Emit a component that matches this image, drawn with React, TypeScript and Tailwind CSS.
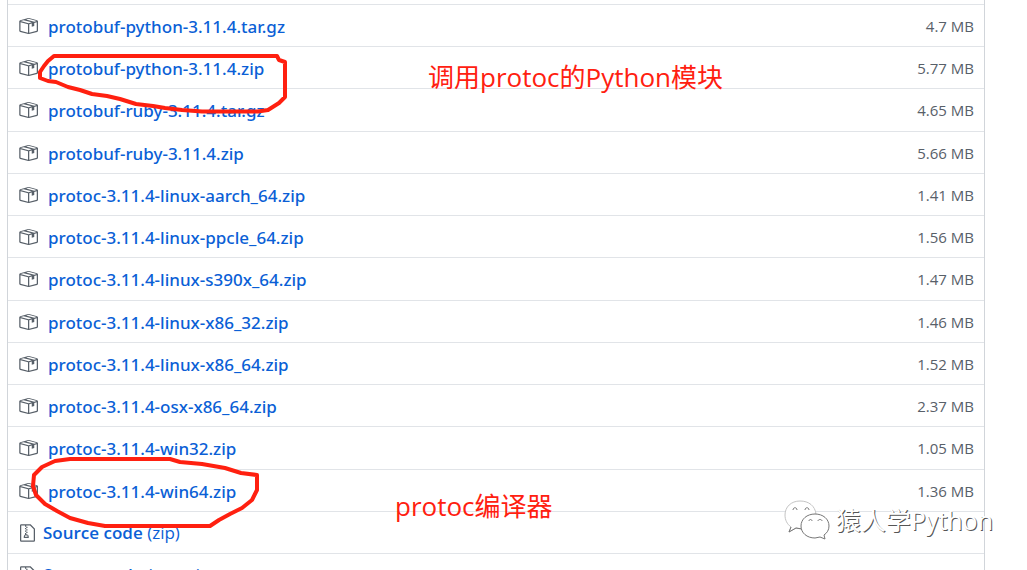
import React from "react";

type Asset = { name: string; size: string };

const assets: Asset[] = [
  { name: "protobuf-python-3.11.4.tar.gz", size: "4.7 MB" },
  { name: "protobuf-python-3.11.4.zip", size: "5.77 MB" },
  { name: "protobuf-ruby-3.11.4.tar.gz", size: "4.65 MB" },
  { name: "protobuf-ruby-3.11.4.zip", size: "5.66 MB" },
  { name: "protoc-3.11.4-linux-aarch_64.zip", size: "1.41 MB" },
  { name: "protoc-3.11.4-linux-ppcle_64.zip", size: "1.56 MB" },
  { name: "protoc-3.11.4-linux-s390x_64.zip", size: "1.47 MB" },
  { name: "protoc-3.11.4-linux-x86_32.zip", size: "1.46 MB" },
  { name: "protoc-3.11.4-linux-x86_64.zip", size: "1.52 MB" },
  { name: "protoc-3.11.4-osx-x86_64.zip", size: "2.37 MB" },
  { name: "protoc-3.11.4-win32.zip", size: "1.05 MB" },
  { name: "protoc-3.11.4-win64.zip", size: "1.36 MB" },
];

const rowClass =
  "flex h-[42px] items-center border-b border-[#e1e4e8] px-2.5 [&:nth-child(4n+3)]:h-[43px]";

function PackageIcon() {
  return (
    <svg viewBox="0 0 16 16" className="size-5 shrink-0 fill-[#586069]" aria-hidden="true">
      <path
        fillRule="evenodd"
        d="M1 4.27v7.47c0 .45.3.84.75.97l6.5 1.73c.16.05.34.05.5 0l6.5-1.73c.45-.13.75-.52.75-.97V4.27c0-.45-.3-.84-.75-.97l-6.5-1.74a1.4 1.4 0 00-.5 0L1.75 3.3c-.45.13-.75.52-.75.97zm7 9.09l-6-1.59V5l6 1.61v6.75zM2 4l2.5-.67L11 5.06l-2.5.67L2 4zm13 7.77l-6 1.59V6.61l2-.55V8.5l2-.53V5.53L15 5v6.77zm-2-7.24L6.5 2.8l2-.53L15 4l-2 .53z"
      />
    </svg>
  );
}

function ZipIcon() {
  return (
    <svg viewBox="0 0 12 16" className="ml-0.5 h-5 w-[15px] shrink-0 fill-[#586069]" aria-hidden="true">
      <path
        fillRule="evenodd"
        d="M8.5 1H1a1 1 0 00-1 1v12a1 1 0 001 1h10a1 1 0 001-1V4.5L8.5 1zM11 14H1V2h3v1h1V2h3l3 3v9zM5 4V3h1v1H5zM4 4h1v1H4V4zm1 2V5h1v1H5zM4 6h1v1H4V6zm1 2V7h1v1H5zM4 9.28A2 2 0 003 11v1h4v-1a2 2 0 00-2-2V8H4v1.28zM6 10v1H4v-1h2z"
      />
    </svg>
  );
}

function AssetRow({ name, size }: Asset) {
  return (
    <li className={rowClass}>
      <PackageIcon />
      <a href="#" className="ml-2.5 pt-0.5 font-['Noto_Sans',sans-serif] text-[17px] leading-6 font-medium text-[#0b5fd6]">
        {name}
      </a>
      <span className="ml-auto text-[15px] leading-6 text-[#586069]">{size}</span>
    </li>
  );
}

function SourceRow({ kind }: { kind: string }) {
  return (
    <li className={rowClass}>
      <ZipIcon />
      <a href="#" className="ml-2 text-[17px] leading-6 text-[#0b5fd6]">
        <span className="font-semibold">Source code</span> ({kind})
      </a>
    </li>
  );
}

function Strokes() {
  return (
    <svg
      viewBox="0 0 310 570"
      className="pointer-events-none absolute top-0 left-0 h-[570px] w-[310px] fill-none stroke-[#ff2010] stroke-4"
      strokeLinejoin="round"
      strokeLinecap="round"
      aria-hidden="true"
    >
      <path d="M54 56H277L279 60L285 62V97L279 103L268 110L258 111.500H202L182 110L165 108L153 106L136 104L120 99L107 96L92 94L80 90L68 87L56 82L48 81L40 78L40 72L44 66L48 61L54 56" />
      <path d="M55 461L70 459H170L180 462L202 464L225 468L241 473L257 475V490L252 500L242 508L230 514L219 520L210 526H105L88 523L70 518L57 511L45 504L36 495L33 486L34 475L42 467L55 461" />
    </svg>
  );
}

function Watermark() {
  return (
    <div className="absolute top-[500px] right-[34px] flex items-center gap-1.5">
      <svg viewBox="0 0 46 40" className="h-10 w-[46px]" fill="none" aria-hidden="true">
        <path
          d="M16 1C7 1 1 7 1 15c0 5 2 9 6 12l-2 5 7-4 6 1C20 22 24 15 32 14 31 6 25 1 16 1z"
          fill="#fff"
          stroke="#c4c4c4"
        />
        <path d="M7 27l-2 5 7-4 6 1" stroke="#777" />
        <path
          d="M31 14c-8 0-14 5-14 12s6 12 14 12l5-1 5 2-1-4c3-2 5-5 5-9 0-7-6-12-14-12z"
          fill="#fff"
          stroke="#777"
        />
        <path d="M9 10c0-3 4-3 4 0M21 10c0-3 4-3 4 0M25 21c0-2 3-2 3 0M34 21c0-2 4-2 4 0" stroke="#777" />
      </svg>
      <span className="text-[25px] leading-10 text-white [text-shadow:1px_1px_0_#555]">猿人学Python</span>
    </div>
  );
}

export default function App() {
  return (
    <main className="relative h-screen overflow-hidden bg-white font-['Open_Sans','Noto_Sans_CJK_SC',sans-serif]">
      <section className="mr-[42px] ml-[7px] border-x border-[#d1d5da]">
        <div className="h-[5px] border-b border-[#e1e4e8]" />
        <ul>
          {assets.map((asset) => (
            <AssetRow key={asset.name} {...asset} />
          ))}
          <SourceRow kind="zip" />
          <SourceRow kind="tar.gz" />
        </ul>
      </section>
      <Strokes />
      <p className="absolute top-[61px] left-[428px] text-[26px] leading-8 text-[#ff2010]">调用protoc的Python模块</p>
      <p className="absolute top-[490px] left-[395px] text-[26px] leading-8 text-[#ff2010]">protoc编译器</p>
      <Watermark />
    </main>
  );
}
